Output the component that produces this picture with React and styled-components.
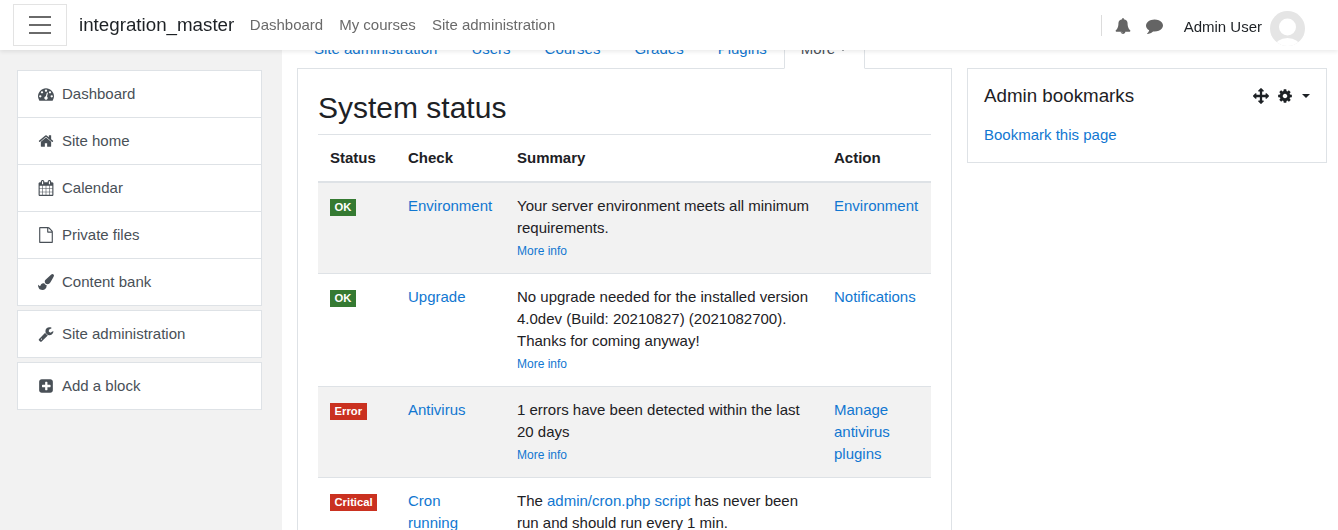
import React from 'react'
import styled, { createGlobalStyle } from 'styled-components'

const GlobalStyle = createGlobalStyle`
  html, body {
    margin: 0;
    height: 530px;
    overflow: hidden;
    background: #fff;
    color: #1d2125;
    font-family: "Liberation Sans", Arial, sans-serif;
    font-size: 15px;
    line-height: 22px;
  }
  a { color: #1177d1; text-decoration: none; }
`

const icons = {
  dashboard: 'M384 1152q0-53-37.5-90.5t-90.5-37.5-90.5 37.5-37.5 90.5 37.5 90.5 90.5 37.5 90.5-37.5 37.5-90.5zm192-448q0-53-37.5-90.5t-90.5-37.5-90.5 37.5-37.5 90.5 37.5 90.5 90.5 37.5 90.5-37.5 37.5-90.5zm428 481l101-382q6-26-7.5-48.5t-38.5-29.5-48 6.5-30 39.5l-101 382q-60 5-107 43.5t-63 98.5q-20 77 20 146t117 89 146-20 89-117q16-60-6-117t-72-91zm660-33q0-53-37.5-90.5t-90.5-37.5-90.5 37.5-37.5 90.5 37.5 90.5 90.5 37.5 90.5-37.5 37.5-90.5zm-640-640q0-53-37.5-90.5t-90.5-37.5-90.5 37.5-37.5 90.5 37.5 90.5 90.5 37.5 90.5-37.5 37.5-90.5zm448 192q0-53-37.5-90.5t-90.5-37.5-90.5 37.5-37.5 90.5 37.5 90.5 90.5 37.5 90.5-37.5 37.5-90.5zm320 448q0 261-141 483-19 29-54 29h-1402q-35 0-54-29-141-221-141-483 0-182 71-348t191-286 286-191 348-71 348 71 286 191 191 286 71 348z',
  home: 'M1472 992v480q0 26-19 45t-45 19h-384v-384h-256v384h-384q-26 0-45-19t-19-45v-480q0-1 .5-3t.5-3l575-474 575 474q1 2 1 6zm223-69l-62 74q-8 9-21 11h-3q-13 0-21-7l-692-577-692 577q-12 8-24 7-13-2-21-11l-62-74q-8-10-7-23.5t11-21.5l719-599q32-26 76-26t76 26l244 204v-195q0-14 9-23t23-9h192q14 0 23 9t9 23v408l219 182q10 8 11 21.5t-7 23.5z',
  calendar: 'M192 1664h288v-288h-288v288zm352 0h320v-288h-320v288zm-352-352h288v-320h-288v320zm352 0h320v-320h-320v320zm-352-384h288v-288h-288v288zm736 736h320v-288h-320v288zm-384-736h320v-288h-320v288zm768 736h288v-288h-288v288zm-384-352h320v-320h-320v320zm-352-864v-288q0-13-9.5-22.5t-22.5-9.5h-64q-13 0-22.5 9.5t-9.5 22.5v288q0 13 9.5 22.5t22.5 9.5h64q13 0 22.5-9.5t9.5-22.5zm736 864h288v-320h-288v320zm-384-384h320v-288h-320v288zm384 0h288v-288h-288v288zm32-480v-288q0-13-9.5-22.5t-22.5-9.5h-64q-13 0-22.5 9.5t-9.5 22.5v288q0 13 9.5 22.5t22.5 9.5h64q13 0 22.5-9.5t9.5-22.5zm384-64v1280q0 52-38 90t-90 38h-1408q-52 0-90-38t-38-90v-1280q0-52 38-90t90-38h128v-96q0-66 47-113t113-47h64q66 0 113 47t47 113v96h384v-96q0-66 47-113t113-47h64q66 0 113 47t47 113v96h128q52 0 90 38t38 90z',
  file: 'M1596 380q28 28 48 76t20 88v1152q0 40-28 68t-68 28h-1344q-40 0-68-28t-28-68v-1600q0-40 28-68t68-28h896q40 0 88 20t76 48zm-444-244v376h376q-10-29-22-41l-313-313q-12-12-41-22zm384 1528v-1024h-416q-40 0-68-28t-28-68v-416h-768v1536h1280z',
  brush: 'M1615 0q70 0 122.5 46.5t52.5 116.5q0 63-45 151-332 629-465 752-97 91-218 91-126 0-216.5-92.5t-90.5-219.5q0-128 92-212l638-579q59-54 130-54zm-909 1034q39 76 106.5 130t150.5 76l1 71q4 213-129.5 347t-348.5 134q-123 0-218-46.5t-152.5-127.5-86.5-183-29-220q7 5 41 30t62 44.5 59 36.5 46 17q41 0 55-37 25-66 57.5-112.5t69.5-76 88-47.5 103-25.5 125-10.5z',
  wrench: 'M448 1472q0-26-19-45t-45-19-45 19-19 45 19 45 45 19 45-19 19-45zm644-420l-682 682q-37 37-90 37-52 0-91-37l-106-108q-38-36-38-90 0-53 38-91l681-681q39 98 114.5 173.5t173.5 114.5zm634-435q0 39-23 106-47 134-164.5 217.5t-258.5 83.5q-185 0-316.5-131.5t-131.5-316.5 131.5-316.5 316.5-131.5q58 0 121.5 16.5t107.5 46.5q16 11 16 28t-16 28l-293 169v224l193 107q5-3 79-48.5t135.5-81 70.5-35.5q15 0 23.5 10t8.5 25z',
  plusSquare: 'M1408 960v-128q0-26-19-45t-45-19h-288v-288q0-26-19-45t-45-19h-128q-26 0-45 19t-19 45v288h-288q-26 0-45 19t-19 45v128q0 26 19 45t45 19h288v288q0 26 19 45t45 19h128q26 0 45-19t19-45v-288h288q26 0 45-19t19-45zm256-544v960q0 119-84.5 203.5t-203.5 84.5h-960q-119 0-203.5-84.5t-84.5-203.5v-960q0-119 84.5-203.5t203.5-84.5h960q119 0 203.5 84.5t84.5 203.5z',
  bell: 'M912 1696q0-16-16-16-59 0-101.5-42.5t-42.5-101.5q0-16-16-16t-16 16q0 73 51.5 124.5t124.5 51.5q16 0 16-16zm816-288q0 52-38 90t-90 38h-448q0 106-75 181t-181 75-181-75-75-181h-448q-52 0-90-38t-38-90q50-42 91-88t85-119.5 74.5-158.5 50-206 19.5-260q0-152 117-282.5t307-158.5q-8-19-8-39 0-40 28-68t68-28 68 28 28 68q0 20-8 39 190 28 307 158.5t117 282.5q0 139 19.5 260t50 206 74.5 158.5 85 119.5 91 88z',
  comment: 'M1792 896q0 174-120 321.5t-326 233-450 85.5q-70 0-145-8-198 175-460 242-49 14-114 22-17 2-30.5-9t-17.5-29v-1q-3-4-.5-12t2-10 4.5-9.5l6-9 7-8.5 8-9q7-8 31-34.5t34.5-38 31-39.5 32.5-51 27-59 26-76q-157-89-247.5-220t-90.5-281q0-130 71-248.5t191-204.5 286-136.5 348-50.5q244 0 450 85.5t326 233 120 321.5z',
  arrows: 'M1792 896q0 26-19 45l-256 256q-19 19-45 19t-45-19-19-45v-128h-384v384h128q26 0 45 19t19 45-19 45l-256 256q-19 19-45 19t-45-19l-256-256q-19-19-19-45t19-45 45-19h128v-384h-384v128q0 26-19 45t-45 19-45-19l-256-256q-19-19-19-45t19-45l256-256q19-19 45-19t45 19 19 45v128h384v-384h-128q-26 0-45-19t-19-45 19-45l256-256q19-19 45-19t45 19l256 256q19 19 19 45t-19 45-45 19h-128v384h384v-128q0-26 19-45t45-19 45 19l256 256q19 19 19 45z',
  cog: 'M1152 896q0-106-75-181t-181-75-181 75-75 181 75 181 181 75 181-75 75-181zm512-109v222q0 12-8 23t-20 13l-185 28q-19 54-39 91 35 50 107 138 10 12 10 25t-9 23q-27 37-99 108t-94 71q-12 0-26-9l-138-108q-44 23-91 38-16 136-29 186-7 28-36 28h-222q-14 0-24.5-8.5t-11.5-21.5l-28-184q-49-16-90-37l-141 107q-10 9-25 9-14 0-25-11-126-114-165-168-7-10-7-23 0-12 8-23 15-21 51-66.5t54-70.5q-27-50-41-99l-183-27q-13-2-21-12.5t-8-23.5v-222q0-12 8-23t19-13l186-28q14-46 39-92-40-57-107-138-10-12-10-24 0-10 9-23 26-36 98.5-107.5t94.5-71.5q13 0 26 10l138 107q44-23 91-38 16-136 29-186 7-28 36-28h222q14 0 24.5 8.5t11.5 21.5l28 184q49 16 90 37l142-107q9-9 24-9 13 0 25 10 129 119 165 170 7 8 7 22 0 12-8 23-15 21-51 66.5t-54 70.5q26 50 41 98l183 28q13 2 21 12.5t8 23.5z',
}

const IconSvg = styled.svg`
  width: ${p => p.$size || 16}px;
  height: ${p => p.$size || 16}px;
  display: block;
  flex: none;
  fill: currentColor;
`

const Icon = ({ name, size }) => (
  <IconSvg viewBox="0 0 1792 1792" $size={size}><path d={icons[name]} /></IconSvg>
)

const Navbar = styled.header`
  position: fixed;
  top: 0;
  left: 0;
  right: 0;
  height: 50px;
  z-index: 10;
  display: flex;
  align-items: center;
  background: #fff;
  box-shadow: 0 2px 4px rgba(0, 0, 0, 0.08);
  padding: 0 33px 0 13px;
`

const MenuButton = styled.button`
  width: 54px;
  height: 42px;
  padding: 0;
  background: #fff;
  border: 1px solid #e3e3e3;
  display: flex;
  flex-direction: column;
  align-items: center;
  justify-content: center;
  gap: 6px;
  margin-right: 12px;

  span {
    width: 22px;
    height: 2px;
    background: #6a6a6a;
  }
`

const Brand = styled.div`
  font-size: 18.75px;
  color: #1d2125;
  margin-right: 15.5px;
`

const NavLinks = styled.nav`
  display: flex;
  gap: 16px;
  flex: 1;

  a { color: #6a6a6a; }
`

const NavTools = styled.div`
  display: flex;
  align-items: center;
  height: 21px;
  padding-left: 13px;
  border-left: 1px solid #dcdcdc;
  color: #646464;
  gap: 15px;
  margin-top: 1px;
`

const UserName = styled.span`
  color: #1d2125;
  margin-left: 21px;
  margin-right: 8px;
  margin-top: 3px;
`

const Avatar = styled.svg`
  width: 35px;
  height: 35px;
  margin-top: 7px;
  display: block;
`

const Page = styled.div`
  display: flex;
  height: 530px;
  overflow: hidden;
`

const Drawer = styled.aside`
  width: 282px;
  flex: none;
  box-sizing: border-box;
  background: #f2f2f2;
  padding: 70px 20px 0 17px;
  display: flex;
  flex-direction: column;
  gap: 4px;
`

const DrawerGroup = styled.div`
  background: #fff;
  border: 1px solid #dee2e6;
`

const DrawerItem = styled.a`
  display: flex;
  align-items: center;
  gap: 8px;
  height: 46px;
  padding-left: 20px;
  color: #495057;
  border-top: ${p => (p.$first ? 'none' : '1px solid #dee2e6')};
`

const Main = styled.main`
  flex: 1;
  min-width: 0;
  display: flex;
  gap: 15px;
  padding: 30px 11px 0 15px;
`

const Content = styled.div`
  width: 655px;
  flex: none;
`

const Tabs = styled.ul`
  list-style: none;
  display: flex;
  margin: 0 0 -1px;
  padding: 0;
  position: relative;
`

const Tab = styled.li`
  padding: 8px 16px;
  border: 1px solid transparent;
  border-top: none;
  ${p => p.$active && `
    background: #fff;
    border-color: #dee2e6;
    border-bottom-color: #fff;
    color: #495057;
    padding-right: 17px;
  `}
`

const Caret = styled.span`
  display: inline-block;
  width: 0;
  height: 0;
  margin-left: ${p => p.$gap || 0}px;
  vertical-align: 3px;
  border-top: 4px solid currentColor;
  border-left: 4px solid transparent;
  border-right: 4px solid transparent;
`

const Region = styled.section`
  border: 1px solid #dee2e6;
  border-bottom: none;
  padding: 21px 20px 0;
  height: 600px;
  box-sizing: border-box;
`

const Title = styled.h2`
  margin: 0 0 8px;
  font-size: 30px;
  line-height: 36px;
  font-weight: 400;
`

const Table = styled.table`
  width: 613px;
  table-layout: fixed;
  border-collapse: collapse;

  th {
    text-align: left;
    padding: 12px;
    border-top: 1px solid #dee2e6;
    border-bottom: 2px solid #dee2e6;
    font-weight: 700;
  }

  td {
    padding: 12px;
    vertical-align: top;
    border-top: 1px solid #dee2e6;
  }

  tbody tr:first-child td { border-top: none; }
  tbody tr:nth-child(odd) { background: #f2f2f2; }
`

const Badge = styled.span`
  display: inline-block;
  padding: 2.8px 4.5px;
  font-size: 11.25px;
  font-weight: 700;
  line-height: 11.25px;
  color: #fff;
  vertical-align: baseline;
  background: ${p => (p.$tone === 'ok' ? '#357a32' : '#ca3120')};
`

const MoreInfo = styled.a`
  display: block;
  font-size: 12px;
  line-height: 24px;
  margin-bottom: -2px;
`

const Side = styled.aside`
  width: 360px;
  flex: none;
  padding-top: 38px;
`

const Block = styled.section`
  border: 1px solid #dee2e6;
  height: 95px;
  box-sizing: border-box;
  padding: 16px;
`

const BlockHead = styled.div`
  display: flex;
  align-items: center;
  justify-content: space-between;
  margin-bottom: 17px;
`

const BlockTitle = styled.h5`
  margin: 0;
  font-size: 18.75px;
  line-height: 22px;
  font-weight: 400;
`

const BlockControls = styled.div`
  display: flex;
  align-items: center;
  color: #1d2125;
  gap: 8px;
`

const drawerMain = [
  { label: 'Dashboard', icon: 'dashboard' },
  { label: 'Site home', icon: 'home' },
  { label: 'Calendar', icon: 'calendar' },
  { label: 'Private files', icon: 'file' },
  { label: 'Content bank', icon: 'brush' },
]

const rows = [
  {
    tone: 'ok', status: 'OK', check: 'Environment', action: 'Environment',
    summary: 'Your server environment meets all minimum requirements.',
  },
  {
    tone: 'ok', status: 'OK', check: 'Upgrade', action: 'Notifications',
    summary: 'No upgrade needed for the installed version 4.0dev (Build: 20210827) (2021082700). Thanks for coming anyway!',
  },
  {
    tone: 'error', status: 'Error', check: 'Antivirus', action: 'Manage antivirus plugins',
    summary: '1 errors have been detected within the last 20 days',
  },
  {
    tone: 'error', status: 'Critical', check: 'Cron running', action: '',
    summary: <>The <a href="#">admin/cron.php script</a> has never been run and should run every 1 min.</>,
  },
]

const App = () => (
  <>
    <GlobalStyle />
    <Navbar>
      <MenuButton aria-label="Menu"><span /><span /><span /></MenuButton>
      <Brand>integration_master</Brand>
      <NavLinks>
        <a href="#">Dashboard</a>
        <a href="#">My courses</a>
        <a href="#">Site administration</a>
      </NavLinks>
      <NavTools>
        <Icon name="bell" />
        <Icon name="comment" size={17} />
      </NavTools>
      <UserName>Admin User</UserName>
      <Avatar viewBox="0 0 35 35">
        <defs>
          <clipPath id="avatar-clip"><circle cx="17.5" cy="17.5" r="17.5" /></clipPath>
        </defs>
        <g clipPath="url(#avatar-clip)">
          <rect width="35" height="35" fill="#e5e5e5" />
          <circle cx="17.5" cy="16" r="8.5" fill="#fff" />
          <ellipse cx="17.5" cy="36" rx="13" ry="9" fill="#fff" />
        </g>
      </Avatar>
    </Navbar>
    <Page>
      <Drawer>
        <DrawerGroup>
          {drawerMain.map(({ label, icon }, i) => (
            <DrawerItem href="#" key={label} $first={i === 0}>
              <Icon name={icon} />
              {label}
            </DrawerItem>
          ))}
        </DrawerGroup>
        <DrawerGroup>
          <DrawerItem href="#" $first><Icon name="wrench" />Site administration</DrawerItem>
        </DrawerGroup>
        <DrawerGroup>
          <DrawerItem href="#" $first><Icon name="plusSquare" />Add a block</DrawerItem>
        </DrawerGroup>
      </Drawer>
      <Main>
        <Content>
          <Tabs>
            <Tab><a href="#">Site administration</a></Tab>
            <Tab><a href="#">Users</a></Tab>
            <Tab><a href="#">Courses</a></Tab>
            <Tab><a href="#">Grades</a></Tab>
            <Tab><a href="#">Plugins</a></Tab>
            <Tab $active>More<Caret $gap={4} /></Tab>
          </Tabs>
          <Region>
            <Title>System status</Title>
            <Table>
              <colgroup>
                <col style={{ width: 78 }} />
                <col style={{ width: 109 }} />
                <col style={{ width: 317 }} />
                <col style={{ width: 109 }} />
              </colgroup>
              <thead>
                <tr><th>Status</th><th>Check</th><th>Summary</th><th>Action</th></tr>
              </thead>
              <tbody>
                {rows.map(row => (
                  <tr key={row.check}>
                    <td><Badge $tone={row.tone}>{row.status}</Badge></td>
                    <td><a href="#">{row.check}</a></td>
                    <td>
                      {row.summary}
                      <MoreInfo href="#">More info</MoreInfo>
                    </td>
                    <td>{row.action && <a href="#">{row.action}</a>}</td>
                  </tr>
                ))}
              </tbody>
            </Table>
          </Region>
        </Content>
        <Side>
          <Block>
            <BlockHead>
              <BlockTitle>Admin bookmarks</BlockTitle>
              <BlockControls>
                <Icon name="arrows" />
                <Icon name="cog" />
                <Caret $gap={1} />
              </BlockControls>
            </BlockHead>
            <a href="#">Bookmark this page</a>
          </Block>
        </Side>
      </Main>
    </Page>
  </>
)

export default App
